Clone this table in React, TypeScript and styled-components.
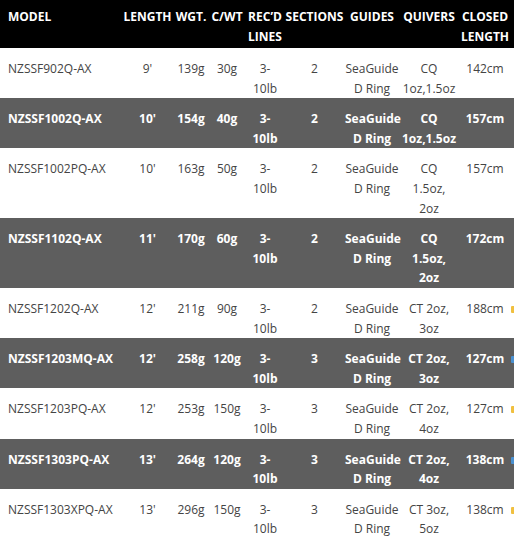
import React from 'react';
import styled, { createGlobalStyle } from 'styled-components';

const GlobalStyle = createGlobalStyle`
  html, body {
    margin: 0;
    padding: 0;
    overflow: hidden;
    background: #ffffff;
  }
`;

const Wrapper = styled.div`
  width: 514px;
  overflow: hidden;
`;

const SpecTable = styled.table`
  width: 530px;
  border-collapse: collapse;
  table-layout: fixed;
  font-family: 'Open Sans', 'Liberation Sans', sans-serif;
  font-size: 12px;
  line-height: 20px;
`;

const HeadRow = styled.tr`
  background: #000000;
  color: #ffffff;
  font-weight: 700;
`;

const HeadCell = styled.th<{ $left?: boolean }>`
  padding: 7px 0 1px;
  text-align: ${(p) => (p.$left ? 'left' : 'center')};
  padding-left: ${(p) => (p.$left ? '8px' : '0')};
  vertical-align: top;
  font-weight: 700;
  white-space: pre-line;
`;

const BodyRow = styled.tr<{ $dark: boolean }>`
  background: ${(p) => (p.$dark ? '#5e5e5e' : '#ffffff')};
  color: ${(p) => (p.$dark ? '#ffffff' : '#444444')};
  font-weight: ${(p) => (p.$dark ? 700 : 400)};
`;

const Cell = styled.td<{ $left?: boolean }>`
  padding: 11px 0 0;
  padding-left: ${(p) => (p.$left ? '8px' : '0')};
  height: 39px;
  line-height: 19.6px;
  text-align: ${(p) => (p.$left ? 'left' : 'center')};
  vertical-align: top;
  white-space: pre-line;
`;

const MarkCell = styled.td`
  padding: 11px 0 0;
  line-height: 19.6px;
  text-align: left;
  vertical-align: top;
`;

const Mark = styled.span<{ $dark: boolean }>`
  display: inline-block;
  width: 6px;
  height: 7px;
  margin-top: 7px;
  border-radius: 1px;
  background: ${(p) => (p.$dark ? '#4a90d0' : '#f0c040')};
`;

type Rod = {
  model: string;
  length: string;
  weight: string;
  cast: string;
  line: string;
  sections: string;
  guides: string;
  quivers: string;
  closed: string;
  mark?: boolean;
};

const rods: Rod[] = [
  { model: 'NZSSF902Q-AX', length: "9'", weight: '139g', cast: '30g', line: '3-\n10lb', sections: '2', guides: 'SeaGuide\nD Ring', quivers: 'CQ\n1oz,1.5oz', closed: '142cm' },
  { model: 'NZSSF1002Q-AX', length: "10'", weight: '154g', cast: '40g', line: '3-\n10lb', sections: '2', guides: 'SeaGuide\nD Ring', quivers: 'CQ\n1oz,1.5oz', closed: '157cm' },
  { model: 'NZSSF1002PQ-AX', length: "10'", weight: '163g', cast: '50g', line: '3-\n10lb', sections: '2', guides: 'SeaGuide\nD Ring', quivers: 'CQ\n1.5oz,\n2oz', closed: '157cm' },
  { model: 'NZSSF1102Q-AX', length: "11'", weight: '170g', cast: '60g', line: '3-\n10lb', sections: '2', guides: 'SeaGuide\nD Ring', quivers: 'CQ\n1.5oz,\n2oz', closed: '172cm' },
  { model: 'NZSSF1202Q-AX', length: "12'", weight: '211g', cast: '90g', line: '3-\n10lb', sections: '2', guides: 'SeaGuide\nD Ring', quivers: 'CT 2oz,\n3oz', closed: '188cm', mark: true },
  { model: 'NZSSF1203MQ-AX', length: "12'", weight: '258g', cast: '120g', line: '3-\n10lb', sections: '3', guides: 'SeaGuide\nD Ring', quivers: 'CT 2oz,\n3oz', closed: '127cm', mark: true },
  { model: 'NZSSF1203PQ-AX', length: "12'", weight: '253g', cast: '150g', line: '3-\n10lb', sections: '3', guides: 'SeaGuide\nD Ring', quivers: 'CT 2oz,\n4oz', closed: '127cm', mark: true },
  { model: 'NZSSF1303PQ-AX', length: "13'", weight: '264g', cast: '120g', line: '3-\n10lb', sections: '3', guides: 'SeaGuide\nD Ring', quivers: 'CT 2oz,\n4oz', closed: '138cm', mark: true },
  { model: 'NZSSF1303XPQ-AX', length: "13'", weight: '296g', cast: '150g', line: '3-\n10lb', sections: '3', guides: 'SeaGuide\nD Ring', quivers: 'CT 3oz,\n5oz', closed: '138cm', mark: true },
];

const columns = [121, 53, 34, 38, 38, 61, 54, 60, 52, 19];

const App: React.FC = () => {
  return (
    <Wrapper>
      <GlobalStyle />
      <SpecTable>
        <colgroup>
          {columns.map((w, i) => (
            <col key={i} style={{ width: w }} />
          ))}
        </colgroup>
        <thead>
          <HeadRow>
            <HeadCell $left>MODEL</HeadCell>
            <HeadCell>LENGTH</HeadCell>
            <HeadCell>WGT.</HeadCell>
            <HeadCell>C/WT</HeadCell>
            <HeadCell>{'REC\u2019D\nLINES'}</HeadCell>
            <HeadCell>SECTIONS</HeadCell>
            <HeadCell>GUIDES</HeadCell>
            <HeadCell>QUIVERS</HeadCell>
            <HeadCell>{'CLOSED\nLENGTH'}</HeadCell>
            <HeadCell />
          </HeadRow>
        </thead>
        <tbody>
          {rods.map((r, i) => {
            const dark = i % 2 === 1;
            return (
              <BodyRow key={r.model} $dark={dark}>
                <Cell $left>{r.model}</Cell>
                <Cell>{r.length}</Cell>
                <Cell>{r.weight}</Cell>
                <Cell>{r.cast}</Cell>
                <Cell>{r.line}</Cell>
                <Cell>{r.sections}</Cell>
                <Cell>{r.guides}</Cell>
                <Cell>{r.quivers}</Cell>
                <Cell>{r.closed}</Cell>
                <MarkCell>{r.mark && <Mark $dark={dark} />}</MarkCell>
              </BodyRow>
            );
          })}
        </tbody>
      </SpecTable>
    </Wrapper>
  );
};

export default App;
